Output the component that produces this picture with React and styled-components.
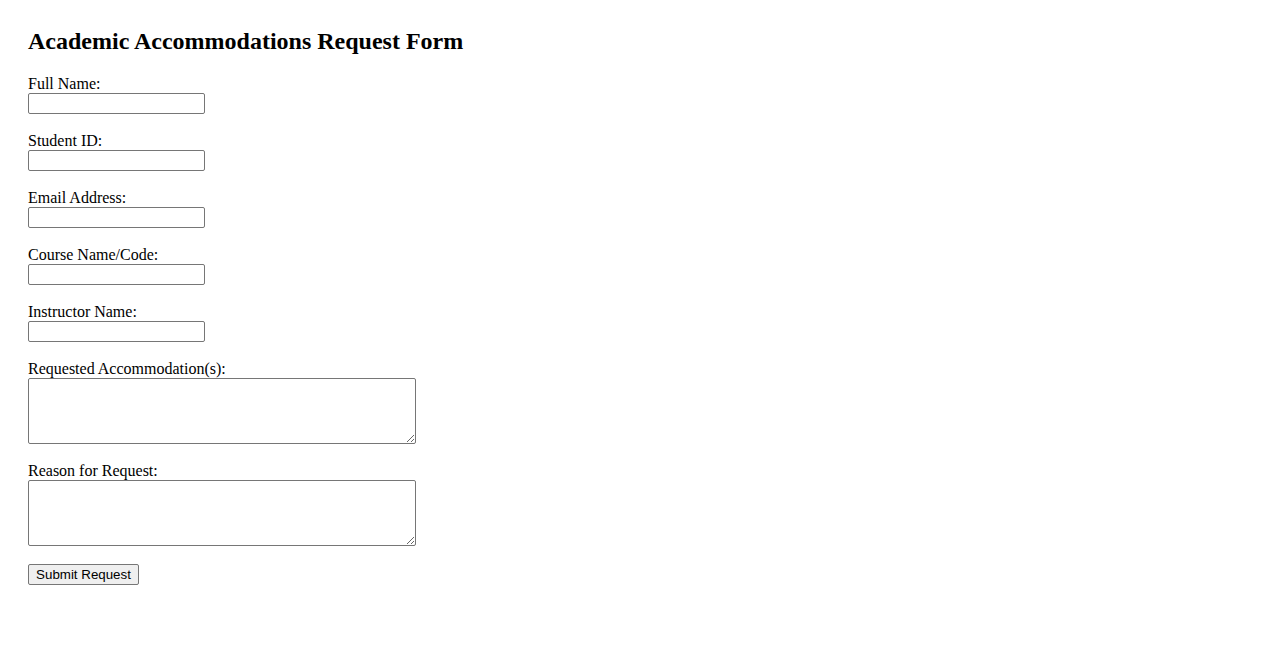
import React from "react";
import styled, { createGlobalStyle } from "styled-components";

const GlobalStyle = createGlobalStyle`
  body {
    margin: 0;
    background: #fff;
    color: #000;
    font-family: "Liberation Serif", "Times New Roman", serif;
  }
`;

const Page = styled.div`
  padding: 28px;
`;

const Title = styled.h2`
  margin: 0 0 20px;
  font-size: 24px;
  line-height: 27px;
  font-weight: bold;
`;

const Form = styled.form`
  display: flex;
  flex-direction: column;
  align-items: flex-start;
`;

const Field = styled.div`
  display: flex;
  flex-direction: column;
  align-items: flex-start;
  margin-bottom: 18px;
`;

const Label = styled.label`
  font-size: 16px;
  line-height: 18px;
  height: 18px;
`;

const Input = styled.input`
  box-sizing: border-box;
  width: 177px;
  height: 21px;
  margin: 0;
  padding: 1px 2px;
  border: 1px solid #767676;
  border-radius: 2px;
  font-family: "Liberation Sans", Arial, sans-serif;
  font-size: 13.33px;
  background: #fff;
`;

const TextArea = styled.textarea`
  box-sizing: border-box;
  width: 388px;
  height: 66px;
  margin: 0;
  padding: 2px;
  border: 1px solid #767676;
  border-radius: 2px;
  font-family: "Liberation Mono", monospace;
  font-size: 13.33px;
  background: #fff;
`;

const Button = styled.button`
  box-sizing: border-box;
  width: 111px;
  height: 21px;
  padding: 1px 6px;
  margin: 0;
  border: 1px solid #767676;
  border-radius: 2px;
  background: #efefef;
  color: #000;
  font-family: "Liberation Sans", Arial, sans-serif;
  font-size: 13.33px;
  line-height: 15px;
`;

const fields = [
  { id: "name", label: "Full Name:" },
  { id: "studentId", label: "Student ID:" },
  { id: "email", label: "Email Address:", type: "email" },
  { id: "course", label: "Course Name/Code:" },
  { id: "instructor", label: "Instructor Name:" },
];

const areas = [
  { id: "accommodations", label: "Requested Accommodation(s):" },
  { id: "reason", label: "Reason for Request:" },
];

const App = () => {
  return (
    <Page>
      <GlobalStyle />
      <Title>Academic Accommodations Request Form</Title>
      <Form onSubmit={e => e.preventDefault()}>
        {fields.map(f => (
          <Field key={f.id}>
            <Label htmlFor={f.id}>{f.label}</Label>
            <Input id={f.id} type={f.type || "text"} />
          </Field>
        ))}
        {areas.map(a => (
          <Field key={a.id}>
            <Label htmlFor={a.id}>{a.label}</Label>
            <TextArea id={a.id} />
          </Field>
        ))}
        <Button type="submit">Submit Request</Button>
      </Form>
    </Page>
  );
};

export default App;
